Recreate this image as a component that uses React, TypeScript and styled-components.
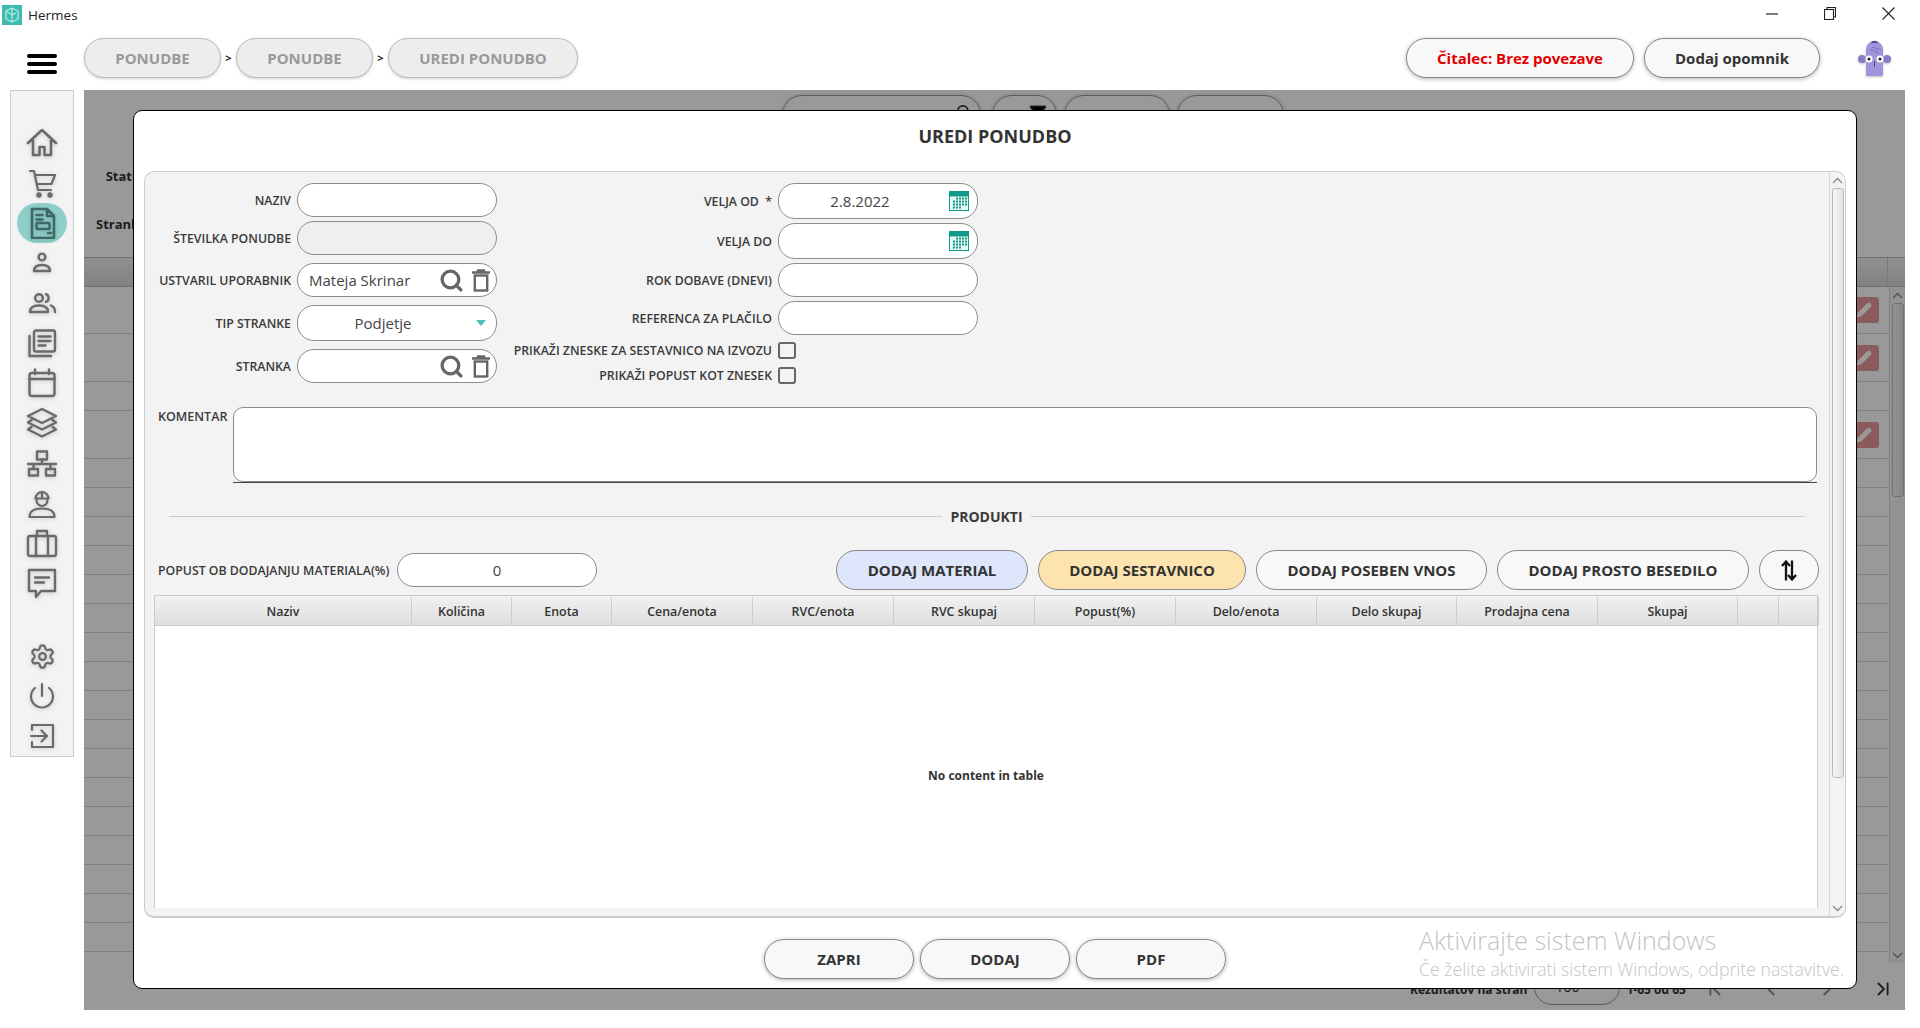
import React from 'react';
import styled, { createGlobalStyle } from 'styled-components';
import { Search, Settings, ChevronFirst, ChevronLast, ChevronLeft, ChevronRight, Pencil, Filter } from 'lucide-react';

const GlobalStyle = createGlobalStyle`
  html, body { margin: 0; padding: 0; background: #fff; overflow: hidden; }
  * { box-sizing: border-box; }
  body { font-family: "Open Sans", "Liberation Sans", sans-serif; color: #333; }
`;

const Root = styled.div`
  position: relative;
  width: 1920px;
  height: 1028px;
  background: #fff;
  overflow: hidden;
`;

const TitleBar = styled.div`
  height: 30px;
  display: flex;
  align-items: center;
  padding: 0 3px 0 2px;
`;

const AppName = styled.span`
  margin-left: 6px;
  font-size: 13.5px;
  color: #222;
  flex: 1;
`;

const WinButton = styled.div`
  width: 58px;
  height: 30px;
  display: flex;
  align-items: center;
  justify-content: center;
  padding-bottom: 3px;
`;

const Toolbar = styled.div`
  height: 60px;
  display: flex;
  align-items: flex-start;
  padding: 8px 29px 0 0;
`;

const Burger = styled.div`
  width: 84px;
  margin-top: 16px;
  display: flex;
  flex-direction: column;
  align-items: center;
  gap: 4px;

  span {
    width: 30px;
    height: 4px;
    border-radius: 2px;
    background: #000;
  }
`;

const Crumb = styled.div<{ $w: number }>`
  width: ${p => p.$w}px;
  height: 40px;
  border: 1px solid #bbb;
  border-radius: 20px;
  background: #ededed;
  box-shadow: 0 1px 3px rgba(0, 0, 0, .18);
  color: #999;
  font-size: 15px;
  font-weight: 700;
  display: flex;
  align-items: center;
  justify-content: center;
`;

const CrumbSep = styled.div`
  width: 15px;
  height: 40px;
  line-height: 40px;
  text-align: center;
  font-size: 11px;
  font-weight: 700;
  color: #222;
`;

const TopButton = styled.div<{ $w: number; $alert?: boolean }>`
  width: ${p => p.$w}px;
  height: 40px;
  margin-right: 10px;
  border: 1px solid #888;
  border-radius: 20px;
  background: #f8f8f8;
  box-shadow: 0 1px 4px rgba(0, 0, 0, .3);
  color: ${p => (p.$alert ? '#e30000' : '#333')};
  font-size: 15px;
  font-weight: 700;
  display: flex;
  align-items: center;
  justify-content: center;
`;

const ToolbarSpacer = styled.div`
  flex: 1;
`;

const Mascot = styled.svg`
  margin-left: 28px;
  margin-top: 1px;
  filter: drop-shadow(0 1px 1px rgba(0, 0, 0, .25));
`;

const Body = styled.div`
  display: flex;
  height: 920px;
`;

const Sidebar = styled.nav`
  width: 64px;
  height: 667px;
  margin-left: 10px;
  padding-top: 32px;
  border: 1px solid #ccc;
  background: #f3f3f3;
  display: flex;
  flex-direction: column;
  align-items: center;
`;

const SideItem = styled.div<{ $active?: boolean; $gapTop?: boolean }>`
  width: 50px;
  height: 40px;
  flex: none;
  margin-top: ${p => (p.$gapTop ? '33px' : '0')};
  border-radius: 20px;
  background: ${p => (p.$active ? '#8fcfca' : 'transparent')};
  color: ${p => (p.$active ? '#3f6765' : '#6a6a6a')};
  display: flex;
  align-items: center;
  justify-content: center;

  svg {
    filter: drop-shadow(0 1px 2px rgba(0, 0, 0, .18));
  }
`;

const Main = styled.main`
  position: relative;
  width: 1821px;
  margin-left: 10px;
  height: 920px;
  overflow: hidden;
  background: #fff;
  display: flex;
  flex-direction: column;
`;

/* page behind the dialog */
const FilterArea = styled.div`
  height: 167px;
  flex: none;
`;

const FilterPills = styled.div`
  display: flex;
  padding: 5px 0 0 698px;
  gap: 7px;
`;

const FilterPill = styled.div<{ $w: number }>`
  width: ${p => p.$w}px;
  height: 40px;
  border: 1px solid #999;
  border-radius: 20px;
  box-shadow: 0 1px 4px rgba(0, 0, 0, .3);
  display: flex;
  align-items: flex-start;
  justify-content: flex-end;
  padding: 8px 9px 0 0;

  &:first-child {
    margin-right: 4px;
  }
`;

const FilterLabel = styled.div<{ $top: number }>`
  width: 63px;
  margin-top: ${p => p.$top}px;
  text-align: right;
  font-size: 13px;
  font-weight: 700;
  color: #333;
`;

const BackHead = styled.div`
  height: 30px;
  flex: none;
  border-top: 1px solid #bbb;
  border-bottom: 1px solid #bbb;
  background: linear-gradient(#f0f0f0, #d8d8d8);
  display: flex;
  justify-content: flex-end;

  span {
    width: 18px;
    border-left: 1px solid #ccc;
  }
`;

const BackTable = styled.div`
  height: 676px;
  flex: none;
  display: flex;
  overflow: hidden;
`;

const BackRows = styled.div`
  flex: 1;
`;

const BackRow = styled.div<{ $h: number }>`
  height: ${p => p.$h}px;
  border-bottom: 1px solid #d8d8d8;
  display: flex;
  align-items: center;
  justify-content: flex-end;
  padding-right: 10px;
`;

const EditButton = styled.div`
  width: 30px;
  height: 26px;
  border-radius: 3px;
  background: #e89696;
  color: #fff;
  display: flex;
  align-items: center;
  justify-content: center;
`;

const BackPager = styled.div`
  height: 47px;
  flex: none;
  display: flex;
  align-items: center;
  padding: 5px 0 0 1326px;
  font-size: 12px;
  font-weight: 700;
  color: #333;
`;

const PagerSize = styled.div`
  width: 86px;
  height: 36px;
  margin: -5px 6px 0 7px;
  padding: 0 12px 0 20px;
  border: 1px solid #999;
  border-radius: 18px;
  display: flex;
  align-items: center;
  justify-content: space-between;
  font-weight: 400;
  font-size: 14px;

  i {
    border-left: 4px solid transparent;
    border-right: 4px solid transparent;
    border-top: 5px solid #4dc1b6;
  }
`;

const PagerIcons = styled.div`
  display: flex;
  margin-left: 18px;
  gap: 34px;
  color: #888;

  svg:last-child {
    color: #333;
  }
`;

const Overlay = styled.div`
  position: absolute;
  inset: 0;
  background: rgba(0, 0, 0, .4);
`;

/* dialog */
const Modal = styled.div`
  position: absolute;
  left: 49px;
  top: 20px;
  width: 1724px;
  height: 879px;
  border: 1px solid #000;
  border-radius: 9px;
  background: #fff;
  display: flex;
  flex-direction: column;
`;

const ModalTitle = styled.h2`
  height: 60px;
  margin: 0;
  padding-top: 13px;
  flex: none;
  text-align: center;
  font-size: 18px;
  font-weight: 700;
  line-height: 24px;
  color: #333;
`;

const Panel = styled.div`
  height: 747px;
  margin: 0 10px;
  flex: none;
  border: 1px solid #ccc;
  border-bottom-width: 2px;
  border-radius: 10px;
  background: #f3f3f3;
  display: flex;
  overflow: hidden;
`;

const PanelBody = styled.div`
  flex: 1;
  min-width: 0;
  padding: 11px 12px 8px 13px;
  display: flex;
  flex-direction: column;
`;

const FormTop = styled.div`
  display: flex;
  gap: 16px;
  flex: none;
`;

const FormColumn = styled.div`
  display: flex;
  flex-direction: column;
`;

const FieldRow = styled.div<{ $top?: number; $h?: number }>`
  display: flex;
  align-items: center;
  gap: 6px;
  margin-top: ${p => p.$top ?? 0}px;
  height: ${p => p.$h ?? 34}px;
`;

const FieldLabel = styled.label<{ $w: number }>`
  width: ${p => p.$w}px;
  flex: none;
  text-align: right;
  font-size: 12.3px;
  font-weight: 600;
  white-space: nowrap;
  color: #3a3a3a;
`;

const Input = styled.div<{ $disabled?: boolean; $h?: number; $center?: boolean }>`
  width: 200px;
  flex: none;
  height: ${p => p.$h ?? 34}px;
  border: 1.5px solid #8c8c8c;
  border-radius: 17px;
  background: ${p => (p.$disabled ? '#efefef' : '#fff')};
  display: flex;
  align-items: center;
  font-size: 15px;
  color: #444;
  justify-content: ${p => (p.$center ? 'center' : 'flex-start')};
`;

const InputText = styled.span<{ $center?: boolean }>`
  flex: 1;
  padding-left: ${p => (p.$center ? '0' : '11px')};
  text-align: ${p => (p.$center ? 'center' : 'left')};
`;

const ToolIcons = styled.div`
  display: flex;
  align-items: center;
  gap: 8px;
  margin-right: 6px;
  color: #666;
`;

const Caret = styled.i`
  width: 0;
  height: 0;
  margin: 0 10px 0 8px;
  border-left: 5px solid transparent;
  border-right: 5px solid transparent;
  border-top: 6px solid #4dc1b6;
`;

const DateIcon = styled.svg`
  margin: 0 8px;
  flex: none;
`;

const Checkbox = styled.div`
  width: 18px;
  height: 17px;
  border: 2px solid #666;
  border-radius: 3px;
  background: #f3f3f3;
`;

const CommentRow = styled.div`
  display: flex;
  margin-top: 23px;
  height: 76px;
  flex: none;
`;

const CommentLabel = styled.label`
  width: 75px;
  flex: none;
  padding-top: 1px;
  font-size: 12.5px;
  font-weight: 600;
  color: #3a3a3a;
`;

const TextArea = styled.div`
  flex: 1;
  border-bottom: 1px solid #444;
  div {
    height: 75px;
    border: 1.5px solid #8c8c8c;
    border-radius: 10px;
    background: #fff;
  }
`;

const Separator = styled.div`
  display: flex;
  align-items: center;
  gap: 8px;
  height: 20px;
  margin: 23px 13px 0 11px;
  flex: none;
  font-size: 14px;
  font-weight: 700;
  color: #3a3a3a;

  &::before, &::after {
    content: '';
    flex: 1;
    height: 1px;
    background: #ccc;
  }
`;

const ActionRow = styled.div`
  display: flex;
  align-items: center;
  height: 40px;
  margin: 24px -2px 0 0;
  flex: none;
`;

const DiscountLabel = styled.label`
  width: 232px;
  margin-right: 7px;
  font-size: 12.3px;
  font-weight: 600;
  white-space: nowrap;
  color: #3a3a3a;
`;

const Actions = styled.div`
  margin-left: auto;
  display: flex;
  gap: 10px;
`;

const ActionButton = styled.button<{ $w: number; $bg?: string }>`
  width: ${p => p.$w}px;
  height: 40px;
  padding: 0;
  border: 1.5px solid #888;
  border-radius: 20px;
  background: ${p => p.$bg ?? '#f8f8f8'};
  font-family: inherit;
  font-size: 15px;
  font-weight: 700;
  color: #333;
  display: flex;
  align-items: center;
  justify-content: center;
`;

const Table = styled.div`
  flex: 1;
  margin: 5px -1px 0 -4px;
  border-left: 1px solid #ccc;
  border-right: 1px solid #ccc;
  background: #fff;
  display: flex;
  flex-direction: column;
`;

const TableHead = styled.div`
  height: 31px;
  flex: none;
  display: flex;
  padding-top: 1px;
  border-top: 1px solid #ccc;
  border-bottom: 1px solid #ccc;
  background: linear-gradient(#f1f1f1, #dedede);
`;

const HeadCell = styled.div<{ $w: number }>`
  width: ${p => p.$w}px;
  flex: none;
  border-right: 1px solid #ccc;
  display: flex;
  align-items: center;
  justify-content: center;
  font-size: 12.4px;
  font-weight: 600;
  color: #333;
`;

const EmptyRow = styled.div`
  flex: 1;
  padding-top: 17px;
  display: flex;
  align-items: center;
  justify-content: center;
  font-size: 12px;
  font-weight: 700;
  color: #333;
`;

const ScrollBar = styled.div`
  width: 16px;
  flex: none;
  border-left: 1px solid #d8d8d8;
  background: #f3f3f3;
  display: flex;
  flex-direction: column;
  align-items: center;
  color: #888;
`;

const ScrollArrow = styled.div`
  height: 16px;
  flex: none;
  display: flex;
  align-items: center;
  justify-content: center;
`;

const ScrollThumb = styled.div<{ $h: number }>`
  width: 12px;
  height: ${p => p.$h}px;
  flex: none;
  border: 1px solid #bbb;
  border-radius: 3px;
  background: linear-gradient(90deg, #f6f6f6, #e2e2e2);
`;

const ScrollRest = styled.div`
  flex: 1;
`;

const Footer = styled.div`
  margin-top: 21px;
  display: flex;
  justify-content: center;
  gap: 6px;
`;

const FooterButton = styled.button`
  width: 150px;
  height: 40px;
  padding: 0;
  border: 1.5px solid #888;
  border-radius: 20px;
  background: #f8f8f8;
  box-shadow: 0 1px 4px rgba(0, 0, 0, .3);
  font-family: inherit;
  font-size: 15px;
  font-weight: 700;
  color: #333;
`;

const Watermark = styled.div`
  position: absolute;
  left: 1419px;
  top: 923px;
  pointer-events: none;
  font-weight: 300;
  color: #c4c4c4;

  p {
    margin: 0;
    font-size: 25px;
    line-height: 34px;
  }

  small {
    display: block;
    margin-top: 1px;
    font-size: 17.7px;
    line-height: 22px;
    white-space: nowrap;
  }
`;

const Line = ({ size = 32, children, sw = 2.6 }: { size?: number; children: React.ReactNode; sw?: number }) => (
  <svg width={size} height={size} viewBox="0 0 32 32" fill="none" stroke="currentColor" strokeWidth={sw} strokeLinejoin="round" strokeLinecap="round">
    {children}
  </svg>
);

const sideIcons: { key: string; active?: boolean; gapTop?: boolean; icon: React.ReactNode }[] = [
  { key: 'home', icon: <Line><path d="M2 16 16 3l14 13M7 12.5V28h6.5v-8h5v8H25V12.5" /></Line> },
  { key: 'cart', icon: <Line sw={2.2}><path d="M4 4h4l4 19h13M9 8h20l-3.500 9H11" /><circle cx="13" cy="28" r="1.6" fill="currentColor" /><circle cx="24" cy="28" r="1.6" fill="currentColor" /></Line> },
  { key: 'offer', active: true, icon: <Line sw={2.5}><path d="M6 2h15l7 7v22H6zM21 2v7h7M10.500 8h6M10.500 12.500h6M22 26h3" /><rect x="10.500" y="16" width="13" height="6" rx="1" /></Line> },
  { key: 'person', icon: <Line sw={2.4}><circle cx="16" cy="10" r="3.400" /><path d="M8 24c0-4 3-6 8-6s8 2 8 6z" /></Line> },
  { key: 'people', icon: <Line sw={2.4}><circle cx="13" cy="11" r="3.800" /><path d="M4 25c0-4.500 3.500-6.500 9-6.500s9 2 9 6.500zM20 7.200c3.500 1 3.500 6.600 0 7.600M25 18.500c2.500 1 4 3 4 6.500" /></Line> },
  { key: 'docs', icon: <Line sw={2.4}><path d="M3.500 9v20H25" /><rect x="8" y="3.500" width="21" height="21" rx="2" /><path d="M12.500 9.500h12M12.500 14h12M12.500 18.500h7" /></Line> },
  { key: 'calendar', icon: <Line sw={2.4}><rect x="3.500" y="6" width="25" height="23" rx="2.500" /><path d="M3.500 12h25M9 2.500V7M23 2.500V7" /></Line> },
  { key: 'layers', icon: <Line sw={2.4}><path d="M16 2 30 9 16 16 2 9zM5.500 13 2 15.500l14 7 14-7-3.500-2.500M5.500 20 2 22.500l14 7 14-7-3.500-2.500" /></Line> },
  { key: 'network', icon: <Line sw={2.4}><rect x="11" y="4.500" width="10" height="8" /><path d="M16 12.500V17M2 17h28M7.500 17v5M24.500 17v5" /><rect x="3" y="22" width="9" height="6.500" /><rect x="20" y="22" width="9" height="6.500" /></Line> },
  { key: 'worker', icon: <Line sw={2.2}><path d="M9.500 11.500a6.500 6.500 0 0 1 13 0zM16 5v6.500M10.500 13a5.500 6 0 0 0 11 0M3.500 30c0-6 5-8.500 12.500-8.500S28.500 24 28.500 30z" /></Line> },
  { key: 'case', icon: <Line sw={2.4}><rect x="2" y="9" width="28" height="20" rx="2" /><path d="M11 9V4h10v5M10 9v20M22 9v20" /></Line> },
  { key: 'chat', icon: <Line sw={2.4}><path d="M3 3h26v21H15l-5 6v-6H3zM9 10.500h14M9 15.500h9" /></Line> },
  { key: 'settings', gapTop: true, icon: <Settings size={27} strokeWidth={2} /> },
  { key: 'power', icon: <Line sw={2.2}><path d="M16 4v12M9 8a11 11 0 1 0 14 0" /></Line> },
  { key: 'exit', icon: <Line sw={2.2}><path d="M6 10V5h21v22H6v-5M5 16h16M15.500 10.500 21 16l-5.500 5.500" /></Line> },
];

const columns: [string, number][] = [
  ['Naziv', 257], ['Količina', 100], ['Enota', 100], ['Cena/enota', 141], ['RVC/enota', 141], ['RVC skupaj', 141],
  ['Popust(%)', 141], ['Delo/enota', 141], ['Delo skupaj', 140], ['Prodajna cena', 141], ['Skupaj', 140], ['', 41], ['', 40],
];

const backRows = [47, 48, 29, 48, ...Array(17).fill(29)];

const Trash = () => (
  <svg width="18" height="23" viewBox="0 0 18 23" fill="none" stroke="currentColor" strokeWidth="2.4">
    <path d="M0 3.500h18M6 3.500V1.500h6v2" />
    <rect x="2.800" y="6.500" width="12.400" height="15" />
  </svg>
);

const SortIcon = () => (
  <svg width="16" height="21" viewBox="0 0 16 21" fill="none" stroke="#111" strokeWidth="2.300">
    <path d="M5 20.500V2M1 6l4-4.500L9 6" />
    <path d="M11 .5V19M7 15l4 4.500 4-4.500" />
  </svg>
);

const CalendarIcon = () => (
  <DateIcon width="20" height="20" viewBox="0 0 20 20">
    <rect width="20" height="20" fill="#0e9b8a" />
    <rect x="1" y="5.500" width="18" height="13.500" fill="#e9f6f4" />
    {[7, 10, 13, 16].map(y => [5, 8, 11, 14, 17].map(x => (
      !(y === 16 && x > 11) && !(y === 7 && x < 8) ? <rect key={`${x}-${y}`} x={x - 1} y={y - 0.5} width="2" height="2" fill="#0e9b8a" /> : null
    )))}
  </DateIcon>
);

const Scroll = ({ thumb }: { thumb: number }) => (
  <ScrollBar>
    <ScrollArrow><svg width="11" height="7" viewBox="0 0 11 7" fill="none" stroke="currentColor" strokeWidth="1.3"><path d="M1 6l4.500-4.500L10 6" /></svg></ScrollArrow>
    <ScrollThumb $h={thumb} />
    <ScrollRest />
    <ScrollArrow><svg width="11" height="7" viewBox="0 0 11 7" fill="none" stroke="currentColor" strokeWidth="1.3"><path d="M1 1l4.500 4.500L10 1" /></svg></ScrollArrow>
  </ScrollBar>
);

const SearchTools = () => (
  <ToolIcons>
    <Search size={25} strokeWidth={3.2} />
    <Trash />
  </ToolIcons>
);

const App: React.FC = () => (
  <Root>
    <GlobalStyle />
    <TitleBar>
      <svg width="20" height="20" viewBox="0 0 20 20">
        <rect width="20" height="20" fill="#3dbdb0" />
        <path d="M10 3 4 6v8l6 3 6-3V6zM10 3v14M4 6l6 4 4-2" fill="none" stroke="#d8f4f0" strokeWidth="1" />
      </svg>
      <AppName>Hermes</AppName>
      <WinButton><svg width="12" height="2"><path d="M0 1h12" stroke="#222" strokeWidth="1.200" /></svg></WinButton>
      <WinButton><svg width="12" height="13" fill="none" stroke="#222" strokeWidth="1.100"><path d="M3 2.500V.5h8.500V10H9.500" /><rect x=".5" y="2.500" width="9" height="10" /></svg></WinButton>
      <WinButton><svg width="13" height="13" stroke="#222" strokeWidth="1.100"><path d="M.5.5l12 12M12.500.5l-12 12" /></svg></WinButton>
    </TitleBar>

    <Toolbar>
      <Burger><span /><span /><span /></Burger>
      <Crumb $w={137}>PONUDBE</Crumb>
      <CrumbSep>&gt;</CrumbSep>
      <Crumb $w={137}>PONUDBE</Crumb>
      <CrumbSep>&gt;</CrumbSep>
      <Crumb $w={190}>UREDI PONUDBO</Crumb>
      <ToolbarSpacer />
      <TopButton $w={228} $alert>Čitalec: Brez povezave</TopButton>
      <TopButton $w={176}>Dodaj opomnik</TopButton>
      <Mascot width="33" height="38" viewBox="0 0 33 38">
        <circle cx="4" cy="20" r="4" fill="#8b7cc8" />
        <circle cx="29" cy="20" r="4" fill="#8b7cc8" />
        <path d="M9 37c-1 0-1-1-1-2V11c0-5 3.500-9 8.500-9S25 6 25 11v24c0 1 0 2-1 2z" fill="#a193dc" />
        <path d="M13 4c1-3 6-3 7 0z" fill="#4d4a90" />
        <path d="M12 10l9 4M14 8l9 3" stroke="#7a6cc0" strokeWidth="1" />
        <circle cx="11" cy="20" r="3.500" fill="#fff" />
        <circle cx="22" cy="20" r="3.500" fill="#fff" />
        <circle cx="11" cy="20" r="1.500" fill="#222" />
        <circle cx="22" cy="20" r="1.500" fill="#222" />
        <path d="M16.500 22v6" stroke="#333" strokeWidth=".8" />
      </Mascot>
    </Toolbar>

    <Body>
      <Sidebar>
        {sideIcons.map(item => (
          <SideItem key={item.key} $active={item.active} $gapTop={item.gapTop}>{item.icon}</SideItem>
        ))}
      </Sidebar>

      <Main>
        <FilterArea>
          <FilterPills>
            <FilterPill $w={199}><Search size={15} strokeWidth={3} /></FilterPill>
            <FilterPill $w={65}><Filter size={18} fill="#000" /></FilterPill>
            <FilterPill $w={106} />
            <FilterPill $w={107} />
          </FilterPills>
          <FilterLabel $top={32}>Status</FilterLabel>
          <FilterLabel $top={30}>Stranka</FilterLabel>
        </FilterArea>
        <BackHead><span /></BackHead>
        <BackTable>
          <BackRows>
            {backRows.map((h, i) => (
              <BackRow key={i} $h={h}>
                {(i === 0 || i === 1 || i === 3) && <EditButton><Pencil size={16} fill="#fff" /></EditButton>}
              </BackRow>
            ))}
          </BackRows>
          <Scroll thumb={194} />
        </BackTable>
        <BackPager>
          <span>Rezultatov na stran</span>
          <PagerSize>100<i /></PagerSize>
          <span>1-65 od 65</span>
          <PagerIcons>
            <ChevronFirst size={22} />
            <ChevronLeft size={22} />
            <ChevronRight size={22} />
            <ChevronLast size={22} />
          </PagerIcons>
        </BackPager>
        <Overlay />

        <Modal>
          <ModalTitle>UREDI PONUDBO</ModalTitle>
          <Panel>
            <PanelBody>
              <FormTop>
                <FormColumn>
                  <FieldRow>
                    <FieldLabel $w={133}>NAZIV</FieldLabel>
                    <Input />
                  </FieldRow>
                  <FieldRow $top={4}>
                    <FieldLabel $w={133}>ŠTEVILKA PONUDBE</FieldLabel>
                    <Input $disabled />
                  </FieldRow>
                  <FieldRow $top={8}>
                    <FieldLabel $w={133}>USTVARIL UPORABNIK</FieldLabel>
                    <Input><InputText>Mateja Skrinar</InputText><SearchTools /></Input>
                  </FieldRow>
                  <FieldRow $top={8} $h={36}>
                    <FieldLabel $w={133}>TIP STRANKE</FieldLabel>
                    <Input $h={36}><InputText $center>Podjetje</InputText><Caret /></Input>
                  </FieldRow>
                  <FieldRow $top={8}>
                    <FieldLabel $w={133}>STRANKA</FieldLabel>
                    <Input><InputText /><SearchTools /></Input>
                  </FieldRow>
                </FormColumn>
                <FormColumn>
                  <FieldRow $h={36}>
                    <FieldLabel $w={259}>VELJA OD&nbsp; *</FieldLabel>
                    <Input $h={36}><InputText $center>2.8.2022</InputText><CalendarIcon /></Input>
                  </FieldRow>
                  <FieldRow $top={4} $h={36}>
                    <FieldLabel $w={259}>VELJA DO</FieldLabel>
                    <Input $h={36}><InputText /><CalendarIcon /></Input>
                  </FieldRow>
                  <FieldRow $top={4}>
                    <FieldLabel $w={259}>ROK DOBAVE (DNEVI)</FieldLabel>
                    <Input />
                  </FieldRow>
                  <FieldRow $top={4}>
                    <FieldLabel $w={259}>REFERENCA ZA PLAČILO</FieldLabel>
                    <Input />
                  </FieldRow>
                  <FieldRow $top={7} $h={17}>
                    <FieldLabel $w={259}>PRIKAŽI ZNESKE ZA SESTAVNICO NA IZVOZU</FieldLabel>
                    <Checkbox />
                  </FieldRow>
                  <FieldRow $top={8} $h={17}>
                    <FieldLabel $w={259}>PRIKAŽI POPUST KOT ZNESEK</FieldLabel>
                    <Checkbox />
                  </FieldRow>
                </FormColumn>
              </FormTop>

              <CommentRow>
                <CommentLabel>KOMENTAR</CommentLabel>
                <TextArea><div /></TextArea>
              </CommentRow>

              <Separator>PRODUKTI</Separator>

              <ActionRow>
                <DiscountLabel>POPUST OB DODAJANJU MATERIALA(%)</DiscountLabel>
                <Input $center><span>0</span></Input>
                <Actions>
                  <ActionButton $w={192} $bg="#dde6fb">DODAJ MATERIAL</ActionButton>
                  <ActionButton $w={208} $bg="#fde4ae">DODAJ SESTAVNICO</ActionButton>
                  <ActionButton $w={231}>DODAJ POSEBEN VNOS</ActionButton>
                  <ActionButton $w={252}>DODAJ PROSTO BESEDILO</ActionButton>
                  <ActionButton $w={60}><SortIcon /></ActionButton>
                </Actions>
              </ActionRow>

              <Table>
                <TableHead>
                  {columns.map(([name, w], i) => <HeadCell key={i} $w={w}>{name}</HeadCell>)}
                </TableHead>
                <EmptyRow>No content in table</EmptyRow>
              </Table>
            </PanelBody>
            <Scroll thumb={590} />
          </Panel>
          <Footer>
            <FooterButton>ZAPRI</FooterButton>
            <FooterButton>DODAJ</FooterButton>
            <FooterButton>PDF</FooterButton>
          </Footer>
        </Modal>
      </Main>
    </Body>

    <Watermark>
      <p>Aktivirajte sistem Windows</p>
      <small>Če želite aktivirati sistem Windows, odprite nastavitve.</small>
    </Watermark>
  </Root>
);

export default App;
